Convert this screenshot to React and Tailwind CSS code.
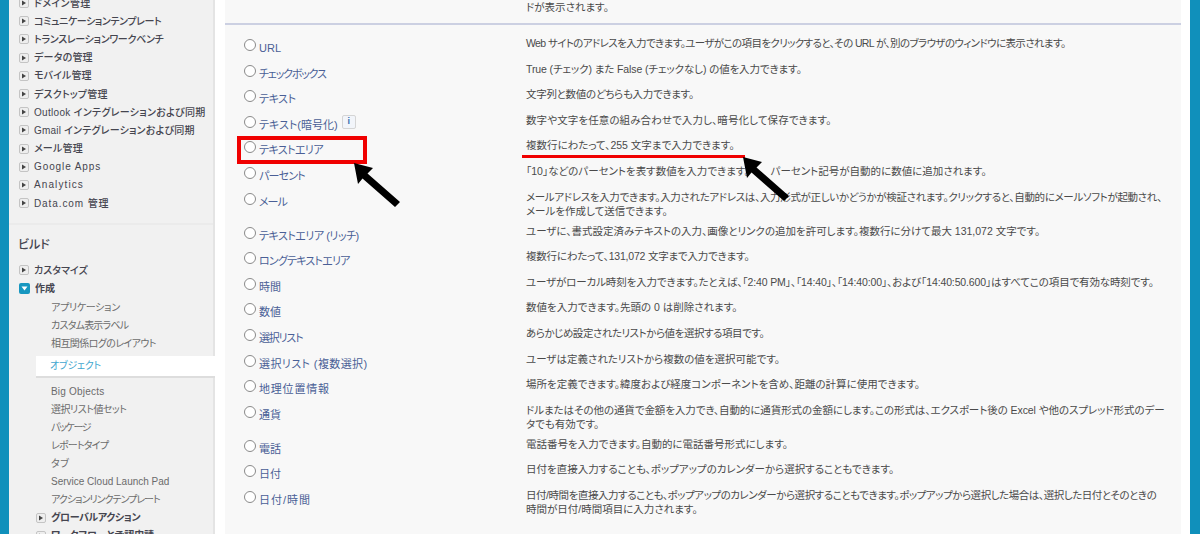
const FONT = "font-['Liberation_Sans','Noto_Sans_CJK_JP',sans-serif] [font-feature-settings:'palt']";

const navTop = [
  { text: "ドメイン管理", track: "tracking-[0.4px]" },
  { text: "コミュニケーションテンプレート", track: "tracking-[-0.4px]" },
  { text: "トランスレーションワークベンチ", track: "tracking-[-0.3px]" },
  { text: "データの管理", track: "tracking-[0.2px]" },
  { text: "モバイル管理", track: "tracking-[0.1px]" },
  { text: "デスクトップ管理", track: "tracking-[0.2px]" },
  { text: "Outlook インテグレーションおよび同期", track: "tracking-[0.3px]" },
  { text: "Gmail インテグレーションおよび同期", track: "tracking-[0.2px]" },
  { text: "メール管理", track: "tracking-[0.2px]" },
  { text: "Google Apps", track: "tracking-[0.9px]" },
  { text: "Analytics", track: "tracking-[1.1px]" },
  { text: "Data.com 管理", track: "tracking-[0.9px]" },
];

const subTop = [
  { text: "アプリケーション", track: "tracking-[-0.3px]" },
  { text: "カスタム表示ラベル", track: "tracking-[-0.8px]" },
  { text: "相互関係ログのレイアウト", track: "tracking-[-0.6px]" },
];

const subBottom = [
  { text: "Big Objects", track: "tracking-[0.2px]" },
  { text: "選択リスト値セット", track: "tracking-[-0.5px]" },
  { text: "パッケージ", track: "tracking-[-1.4px]" },
  { text: "レポートタイプ", track: "tracking-[-0.8px]" },
  { text: "タブ", track: "tracking-[0.3px]" },
  { text: "Service Cloud Launch Pad", track: "tracking-[0px]" },
  { text: "アクションリンクテンプレート", track: "tracking-[-1px]" },
];

const fieldTypes = [
  { label: "URL", lines: [{ text: "Web サイトのアドレスを入力できます。ユーザがこの項目をクリックすると、その URL が、別のブラウザのウィンドウに表示されます。", track: "tracking-[-0.61px]" }] },
  { label: "チェックボックス", track: "tracking-[-1.2px]", lines: [{ text: "True (チェック) また False (チェックなし) の値を入力できます。", track: "tracking-[-0.1px]" }] },
  { label: "テキスト", track: "tracking-[-0.4px]", lines: [{ text: "文字列と数値のどちらも入力できます。", track: "tracking-[-0.3px]" }] },
  { label: "テキスト(暗号化)", info: true, lines: [{ text: "数字や文字を任意の組み合わせで入力し、暗号化して保存できます。", track: "tracking-[0.1px]" }] },
  { label: "テキストエリア", track: "tracking-[-0.6px]", lines: [{ text: "複数行にわたって、255 文字まで入力できます。" }] },
  { label: "パーセント", track: "tracking-[-0.8px]", lines: [{ text: "「10」などのパーセントを表す数値を入力できます。　　パーセント記号が自動的に数値に追加されます。" }] },
  { label: "メール", track: "tracking-[-1px]", lines: [{ text: "メールアドレスを入力できます。入力されたアドレスは、入力形式が正しいかどうかが検証されます。クリックすると、自動的にメールソフトが起動され、", track: "tracking-[-0.33px]" }, { text: "メールを作成して送信できます。" }] },
  { label: "テキストエリア (リッチ)", track: "tracking-[-0.5px]", lines: [{ text: "ユーザに、書式設定済みテキストの入力、画像とリンクの追加を許可します。複数行に分けて最大 131,072 文字です。" }] },
  { label: "ロングテキストエリア", track: "tracking-[-0.8px]", lines: [{ text: "複数行にわたって、131,072 文字まで入力できます。", track: "tracking-[-0.2px]" }] },
  { label: "時間", lines: [{ text: "ユーザがローカル時刻を入力できます。たとえば、「2:40 PM」、「14:40」、「14:40:00」、および「14:40:50.600」はすべてこの項目で有効な時刻です。", track: "tracking-[-0.13px]" }] },
  { label: "数値", lines: [{ text: "数値を入力できます。先頭の 0 は削除されます。" }] },
  { label: "選択リスト", track: "tracking-[-1.2px]", lines: [{ text: "あらかじめ設定されたリストから値を選択する項目です。", track: "tracking-[-0.45px]" }] },
  { label: "選択リスト (複数選択)", track: "tracking-[0.4px]", lines: [{ text: "ユーザは定義されたリストから複数の値を選択可能です。" }] },
  { label: "地理位置情報", track: "tracking-[0.8px]", lines: [{ text: "場所を定義できます。緯度および経度コンポーネントを含め、距離の計算に使用できます。" }] },
  { label: "通貨", lines: [{ text: "ドルまたはその他の通貨で金額を入力でき、自動的に通貨形式の金額にします。この形式は、エクスポート後の Excel や他のスプレッド形式のデー", track: "tracking-[-0.07px]" }, { text: "タでも有効です。" }] },
  { label: "電話", lines: [{ text: "電話番号を入力できます。自動的に電話番号形式にします。" }] },
  { label: "日付", lines: [{ text: "日付を直接入力することも、ポップアップのカレンダーから選択することもできます。" }] },
  { label: "日付/時間", track: "tracking-[1px]", lines: [{ text: "日付/時間を直接入力することも、ポップアップのカレンダーから選択することもできます。ポップアップから選択した場合は、選択した日付とそのときの", track: "tracking-[-0.45px]" }, { text: "時間が日付/時間項目に入力されます。" }] },
];

const ExpandIcon = () => (
  <span className="flex h-[10px] w-[10px] shrink-0 items-center justify-center rounded-[2px] border border-[#c4c4c4] bg-[#eeeeee]">
    <svg width="6" height="6" viewBox="0 0 6 6">
      <path d="M1 0.5 L5 3 L1 5.5 Z" fill="#444444" />
    </svg>
  </span>
);

const CollapseIcon = () => (
  <span className="flex h-[11px] w-[11px] shrink-0 items-center justify-center rounded-[2px] bg-[#1797c0]">
    <svg width="7" height="5" viewBox="0 0 7 5">
      <path d="M0.5 0.5 L6.5 0.5 L3.5 4.5 Z" fill="#ffffff" />
    </svg>
  </span>
);

const NavItem = ({ children, track = "tracking-[0.4px]" }) => (
  <div className="flex h-[18.2px] items-center gap-[5px] pl-[10px]">
    <ExpandIcon />
    <span className={`whitespace-nowrap text-[10px] font-medium text-[#45454f] ${track}`}>{children}</span>
  </div>
);

const SubItem = ({ children, track }) => (
  <div className={`flex h-[18px] items-center whitespace-nowrap pl-[42px] text-[10px] text-[#6b6b6b] ${track}`}>{children}</div>
);

const Sidebar = () => (
  <aside className="flex h-full w-[206px] shrink-0 flex-col border-r-2 border-[#e4e4e4] bg-[#f1f1f1]">
    {/* Upper group, scrolled past the top edge */}
    <div className="mt-[-6px] pb-[11px]">
      {navTop.map((item) => (
        <NavItem key={item.text} track={item.track}>{item.text}</NavItem>
      ))}
    </div>
    <div className="border-t-2 border-[#ebebeb] pl-[9px] pt-[11px] text-[12px] font-medium leading-[18px] text-[#45454f]">
      ビルド
    </div>
    <div className="mt-[7px]">
      <NavItem track="tracking-[0px]">カスタマイズ</NavItem>
      <div className="flex h-[18.2px] items-center gap-[5px] pl-[10px]">
        <CollapseIcon />
        <span className="text-[10px] font-bold text-[#45454f]">作成</span>
      </div>
      <div className="pt-[1px]">
        {subTop.map((item) => (
          <SubItem key={item.text} track={item.track}>{item.text}</SubItem>
        ))}
      </div>
      <div className="my-[3px] ml-[27px] mr-[-2px] flex h-[22px] items-center border-b-2 border-[#dddddd] bg-white pl-[14px] text-[10px] tracking-[-0.3px] text-[#3fa6cf]">
        オブジェクト
      </div>
      <div className="pt-[2px]">
        {subBottom.map((item) => (
          <SubItem key={item.text} track={item.track}>{item.text}</SubItem>
        ))}
      </div>
      <div className="flex h-[18px] items-center gap-[5px] pl-[27px]">
        <ExpandIcon />
        <span className="whitespace-nowrap text-[10px] font-bold tracking-[-0.4px] text-[#45454f]">グローバルアクション</span>
      </div>
      <div className="flex h-[18px] items-center gap-[5px] pl-[27px]">
        <ExpandIcon />
        <span className="whitespace-nowrap text-[10px] font-bold tracking-[-0.2px] text-[#45454f]">ワークフローと承認申請</span>
      </div>
    </div>
  </aside>
);

const FieldRow = ({ type }) => (
  <div className="flex min-h-[25.6px] pb-[6px]">
    <div className="flex w-[301px] shrink-0 items-start pl-[19px] pt-[3px]">
      <span className="h-[12px] w-[12px] shrink-0 rounded-full border border-[#8a8a8a] bg-white" />
      <span className={`ml-[3px] mt-[2px] whitespace-nowrap text-[11px] leading-[14px] text-[#4a5f96] ${type.track ?? ""}`}>{type.label}</span>
      {type.info && (
        <span className="ml-[4px] mt-[-1px] flex h-[14px] w-[14px] items-center justify-center rounded-[2px] border border-[#d5d5d5] bg-[#f2f5fa] text-[9px] font-bold leading-none text-[#3a6db0]">
          i
        </span>
      )}
    </div>
    <div className="whitespace-nowrap text-[10.5px] leading-[14px] text-[#4a4a4a]">
      {type.lines.map((line) => (
        <div key={line.text} className={line.track}>{line.text}</div>
      ))}
    </div>
  </div>
);

const Arrow = ({ className }) => (
  <svg className={className} width="50" height="46" viewBox="0 0 50 46">
    <path d="M1 1 L20 6 L14.5 11.5 L47 40 L42 45 L9.5 16.5 L5 22 Z" fill="#000000" />
  </svg>
);

export default function App() {
  return (
    <div className={`relative flex h-[534px] w-[1200px] overflow-hidden bg-white ${FONT}`}>
      <div className="w-[9px] shrink-0 bg-[#1090bb]" />
      <Sidebar />
      <main className="ml-[10px] w-[956px] shrink-0 bg-[#f8f8f8]">
        <div className="h-[25px] border-b-2 border-[#ccd0e2] pl-[301px] text-[10.5px] leading-[14px] text-[#4a4a4a]">
          ドが表示されます。
        </div>
        <div className="pt-[11px]">
          {fieldTypes.map((type) => (
            <FieldRow key={type.label} type={type} />
          ))}
        </div>
      </main>
      <div className="ml-[9px] w-[10px] shrink-0 bg-[#1090bb]" />

      {/* Annotations drawn on top of the screenshot */}
      <div className="absolute left-[237px] top-[136px] h-[28px] w-[130px] border-[4px] border-[#f00000]" />
      <div className="absolute left-[522px] top-[155px] h-[3px] w-[223px] bg-[#f00000]" />
      <Arrow className="absolute left-[353px] top-[162px]" />
      <Arrow className="absolute left-[742px] top-[156px]" />
    </div>
  );
}
